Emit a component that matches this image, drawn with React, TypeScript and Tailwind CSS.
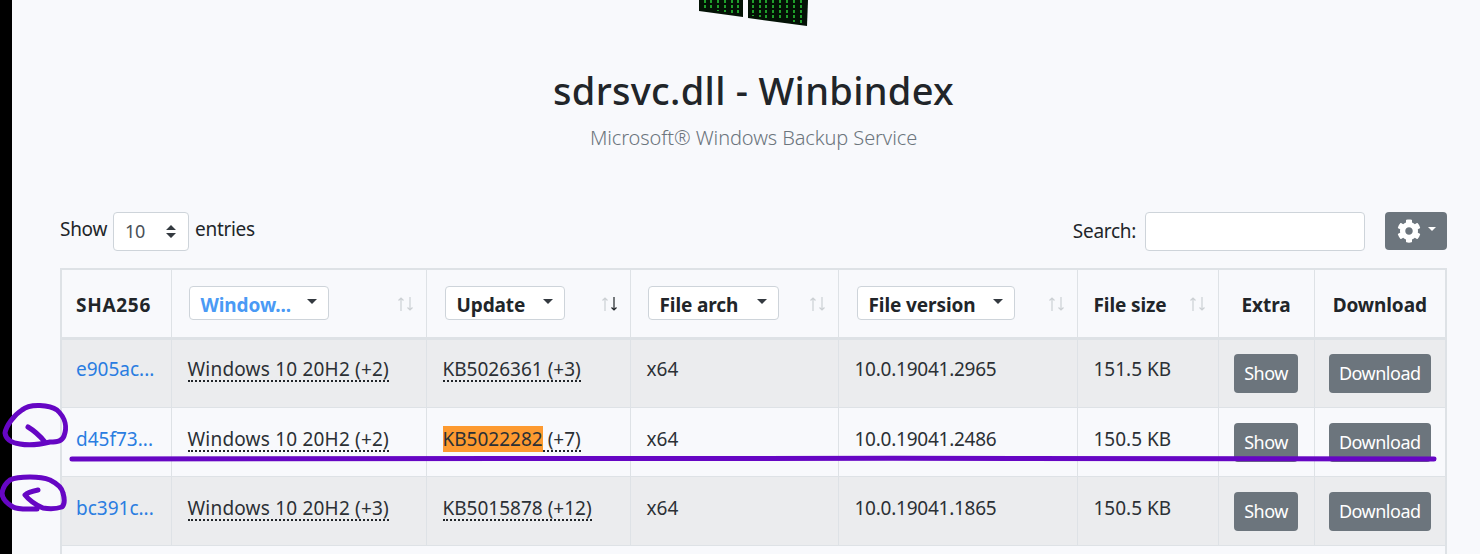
import React from "react";
import { FaCog } from "react-icons/fa";

const FONT = "font-['Noto_Sans','Open_Sans',sans-serif]";

const rows = [
  { sha: "e905ac...", win: "Windows 10 20H2 (+2)", kb: "KB5026361", more: " (+3)", ver: "10.0.19041.2965", size: "151.5 KB", striped: true, lift: "pb-2" },
  { sha: "d45f73...", win: "Windows 10 20H2 (+2)", kb: "KB5022282", more: " (+7)", ver: "10.0.19041.2486", size: "150.5 KB", mark: true, lift: "pb-1" },
  { sha: "bc391c...", win: "Windows 10 20H2 (+3)", kb: "KB5015878", more: " (+12)", ver: "10.0.19041.1865", size: "150.5 KB", striped: true, lift: "pb-1" },
];

const Caret = ({ className = "" }: { className?: string }) => (
  <span className={`inline-block w-0 h-0 border-x-[5px] border-x-transparent border-t-[5px] border-t-[#343a40] ${className}`} />
);

const SortArrows = ({ down = false }: { down?: boolean }) => (
  <svg width="18" height="16" viewBox="0 0 18 16" className="absolute right-[11px] top-[26px]" fill="none" strokeWidth="1.2">
    <path d="M4 15V2M1.5 4.5 4 2l2.5 2.5" stroke="#ccd0d4" />
    <path d="M13 1v13M10.5 11.5 13 14l2.5-2.5" stroke={down ? "#212529" : "#ccd0d4"} />
  </svg>
);

const FilterButton = ({ label, width, active = false, className = "" }: { label: string; width: string; active?: boolean; className?: string }) => (
  <div className={`inline-flex items-center justify-between h-[34px] rounded-[4px] border border-[#ced4da] bg-white pl-[11px] pr-[11px] font-bold text-[19px] tracking-[-0.1px] ${width} ${className} ${active ? "text-[#4a9af5]" : "text-[#212529]"}`}>
    <span className="pt-[3px]">{label}</span>
    <Caret className="mb-1" />
  </div>
);

const Th = ({ children, className = "" }: { children?: React.ReactNode; className?: string }) => (
  <th className={`relative border border-[#dee2e6] border-b-[3px] px-[15px] h-[69px] text-[19px] font-bold tracking-[-0.1px] text-[#212529] ${className}`}>
    {children}
  </th>
);

const Dotted = ({ children }: { children: React.ReactNode }) => (
  <span className="border-b-2 border-dotted border-[#212529] leading-[21px] inline-block">{children}</span>
);

const GrayButton = ({ label }: { label: string }) => (
  <span className="inline-flex items-center justify-center h-[39px] px-[10px] rounded-[4px] bg-[#6c757d] text-white text-[18px] tracking-[-0.5px] align-middle">
    {label}
  </span>
);

// windows logo from the page header, green matrix texture
const Logo = () => (
  <svg width="110" height="26" viewBox="0 0 110 26" className="block">
    <polygon points="0,0 44,0 44,17 0,11" fill="#031205" />
    <polygon points="49,0 109,0 108,26 49,18" fill="#031205" />
    <g stroke="#1f9e2a" strokeWidth="2" strokeDasharray="3 2">
      <path d="M6 0v9M12 0v10M19 0v11M26 0v12M33 0v13M39 0v14" />
      <path d="M54 0v16M61 0v17M67 0v18M74 0v19M81 0v20M88 0v20M95 0v22M102 0v23" />
    </g>
  </svg>
);

const Marks = () => (
  <svg width="1480" height="554" viewBox="0 0 1480 554" fill="none" className="absolute inset-0 pointer-events-none" stroke="#6606c4" strokeLinecap="round" strokeLinejoin="round">
    <path d="M72 459 C400 458 1000 458 1434 459" strokeWidth="5" />
    <path d="M50 442 C58 442 62 441 64 436 C67 428 66 418 57 410 C50 405 30 403 22 410 C14 415 6 426 5 433 C6 441 13 443 20 444 C30 446 42 444 50 442" strokeWidth="5" />
    <path d="M28 427 C33 430 40 436 45 442" strokeWidth="5" />
    <path d="M37 509 C28 509 18 510 13 507 C6 503 2 498 2 493 C3 487 6 483 10 480 C16 477 24 477 30 477 C38 477 45 478 50 480 C56 483 62 488 63 493 C65 500 64 505 62 507 C56 509 49 509 43 508 C36 505 29 500 25 495 C28 492 33 491 38 490" strokeWidth="5" />
  </svg>
);

export default function App() {
  return (
    <div className={`relative w-[1480px] h-[554px] overflow-hidden flex bg-[#f8f9fc] text-[#212529] ${FONT}`}>
      <div className="w-3 bg-black shrink-0" />
      <div className="flex-1 pl-12 pr-[33px]">
        <div className="flex justify-center">
          <Logo />
        </div>
        <h1 className="mt-[38px] text-center text-[38px] leading-[52px] font-medium tracking-[0.3px]">sdrsvc.dll - Winbindex</h1>
        <p className="mt-[8px] text-center text-[20px] leading-[28px] font-light tracking-[-0.1px] text-[#6c757d]">Microsoft® Windows Backup Service</p>

        <div className="flex items-start justify-between mt-[60px] h-[56px]">
          <div className="flex items-center gap-[6px] text-[19px] tracking-[-0.3px] h-[38px]">
            <span className="pb-[4px]">Show</span>
            <div className="flex items-center justify-between w-[76px] h-[39px] rounded-[4px] border border-[#ced4da] bg-white pl-[11px] pr-[12px] text-[#495057] text-[18px]">
              <span>10</span>
              <svg width="10" height="13" viewBox="0 0 10 13"><path d="M5 0 10 5H0ZM5 13 0 8h10Z" fill="#343a40" /></svg>
            </div>
            <span className="pb-[4px]">entries</span>
          </div>
          <div className="flex items-center">
            <span className="text-[19px] tracking-[-0.3px] mr-[9px]">Search:</span>
            <div className="w-[220px] h-[39px] rounded-[4px] border border-[#ced4da] bg-white" />
            <div className="ml-[20px] w-[62px] h-[38px] mb-[1px] rounded-[4px] bg-[#6c757d] flex items-center justify-center gap-[7px]">
              <FaCog size={24} color="white" />
              <span className="inline-block w-0 h-0 border-x-[4px] border-x-transparent border-t-[4px] border-t-white mb-1" />
            </div>
          </div>
        </div>

        <table className="table-fixed border-collapse w-[1387px] border-2 border-[#dee2e6]">
          <colgroup>
            <col className="w-[110px]" />
            <col className="w-[255px]" />
            <col className="w-[204px]" />
            <col className="w-[208px]" />
            <col className="w-[239px]" />
            <col className="w-[141px]" />
            <col className="w-[96px]" />
            <col className="w-[132px]" />
          </colgroup>
          <thead>
            <tr>
              <Th className="text-left pl-[14px] pt-[4px] tracking-[0.7px]">SHA256</Th>
              <Th className="text-left"><FilterButton label="Window..." width="w-[140px]" className="ml-[2px]" active /><SortArrows /></Th>
              <Th className="text-left"><FilterButton label="Update" width="w-[120px]" className="ml-[3px]" /><SortArrows down /></Th>
              <Th className="text-left"><FilterButton label="File arch" width="w-[131px]" className="ml-[2px]" /><SortArrows /></Th>
              <Th className="text-left"><FilterButton label="File version" width="w-[158px]" className="ml-[3px]" /><SortArrows /></Th>
              <Th className="text-left pl-[16px] pt-[4px]">File size<SortArrows /></Th>
              <Th className="text-center pt-[4px]">Extra</Th>
              <Th className="text-center pt-[4px]">Download</Th>
            </tr>
          </thead>
          <tbody className="text-[19px] text-[#2b3035]">
            {rows.map((r) => (
              <tr key={r.sha} className={r.striped ? "bg-[#ebecee]" : ""}>
                <td className={`border border-[#dee2e6] pl-[14px] pr-[15px] h-[69px] text-[#2a7de1] ${r.lift}`}>{r.sha}</td>
                <td className={`border border-[#dee2e6] pl-[16px] pr-[15px] tracking-[0.2px] ${r.lift}`}><Dotted>{r.win}</Dotted></td>
                <td className={`border border-[#dee2e6] pl-[16px] pr-[15px] ${r.lift}`}>
                  <Dotted>
                    {r.mark ? <span className="bg-[#fd9a30]">{r.kb}</span> : r.kb}
                    {r.more}
                  </Dotted>
                </td>
                <td className={`border border-[#dee2e6] pl-[16px] pr-[15px] ${r.lift}`}>x64</td>
                <td className={`border border-[#dee2e6] pl-[16px] pr-[15px] tracking-[-0.25px] ${r.lift}`}>{r.ver}</td>
                <td className={`border border-[#dee2e6] pl-[16px] pr-[15px] ${r.lift}`}>{r.size}</td>
                <td className="border border-[#dee2e6] text-center pt-[1px]"><GrayButton label="Show" /></td>
                <td className="border border-[#dee2e6] text-center pt-[1px]"><GrayButton label="Download" /></td>
              </tr>
            ))}
            <tr><td colSpan={8} className="border border-[#dee2e6] h-[69px]" /></tr>
          </tbody>
        </table>
      </div>
      <Marks />
    </div>
  );
}
